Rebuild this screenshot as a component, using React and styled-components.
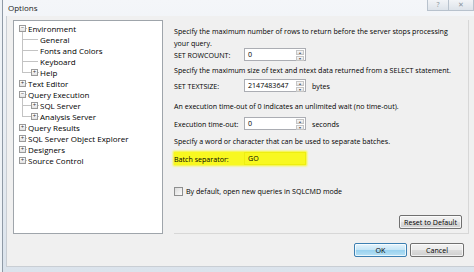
import styled, { createGlobalStyle } from "styled-components";

const GlobalStyle = createGlobalStyle`
  html, body {
    margin: 0;
    padding: 0;
    background: #eef2f6;
  }
  body {
    font-family: "Open Sans", "Noto Sans", "Liberation Sans", sans-serif;
    font-size: 7.1px;
    color: #000;
  }
`;

const Window = styled.div`
  width: 472px;
  height: 272px;
  box-sizing: border-box;
  display: flex;
  flex-direction: column;
  background: linear-gradient(#f4f6f9, #dbe3ec);
  border-left: 1px solid #8f9aa6;
  margin-left: 2px;
  padding: 0 0 5px 3px;
  overflow: hidden;
`;

const TitleBar = styled.div`
  height: 16px;
  display: flex;
  align-items: flex-start;
  justify-content: space-between;
`;

const Title = styled.span`
  font-size: 8px;
  padding: 2px 0 0 2px;
  color: #222;
`;

const CaptionButtons = styled.div`
  display: flex;
`;

const CaptionButton = styled.div`
  width: ${(p) => p.$w}px;
  height: 10px;
  border: 1px solid #b8c2cd;
  border-top: none;
  border-left-width: ${(p) => (p.$first ? 1 : 0)}px;
  background: linear-gradient(#f2f4f7, #dde3ea);
  font-size: 7px;
  line-height: 10px;
  text-align: center;
  color: #8a939c;
`;

const Client = styled.div`
  flex: 1;
  background: #f0f0f0;
  border-left: 1px solid #c9ced4;
  border-bottom: 1px solid #c9ced4;
  display: flex;
  flex-direction: column;
  padding: 4px 0 0 6px;
`;

const Main = styled.div`
  display: flex;
  height: 214px;
`;

const Tree = styled.div`
  width: 150px;
  background: #fff;
  border: 1px solid #9fa5ab;
  padding-top: 2px;
  box-sizing: border-box;
  font-size: 8px;
`;

const TreeRow = styled.div`
  position: relative;
  height: 11px;
  line-height: 11px;
  padding-left: ${(p) => p.$indent}px;
  white-space: nowrap;
`;

const Guide = styled.span`
  position: absolute;
  left: 8px;
  top: ${(p) => p.$top}px;
  height: ${(p) => p.$h}px;
  border-left: 1px solid #c3c3c3;
`;

const Tick = styled.span`
  position: absolute;
  left: ${(p) => p.$left}px;
  top: 5px;
  width: ${(p) => p.$w}px;
  border-top: 1px solid #c3c3c3;
`;

const Expander = styled.span`
  position: absolute;
  left: ${(p) => p.$left}px;
  top: 2px;
  width: 5px;
  height: 5px;
  border: 1px solid #9a9a9a;
  background: linear-gradient(#fff, #e2e2e2);
  font-size: 6px;
  line-height: 5px;
  text-align: center;
  color: #333;
  z-index: 1;
`;

const Panel = styled.div`
  flex: 1;
  margin-left: 11px;
  margin-right: 5px;
  border-bottom: 1px solid #d7d7d7;
  border-right: 1px solid #d7d7d7;
  display: flex;
  flex-direction: column;
  padding-top: 5px;
`;

const Note = styled.p`
  margin: ${(p) => p.$mt || 0}px 0 0;
  line-height: 12px;
  white-space: nowrap;
`;

const FieldRow = styled.div`
  display: flex;
  align-items: center;
  height: 13px;
  margin-top: ${(p) => p.$mt}px;
  background: ${(p) => (p.$hl ? "#f8f820" : "transparent")};
  width: ${(p) => (p.$hl ? "132px" : "auto")};
  box-shadow: ${(p) => (p.$hl ? "0 0 2px 1px #f8f820" : "none")};
`;

const Label = styled.span`
  width: 70px;
  flex: none;
`;

const Input = styled.div`
  width: 62px;
  height: 13px;
  box-sizing: border-box;
  border: 1px solid ${(p) => (p.$hl ? "#eeee10" : "#abadb3")};
  background: ${(p) => (p.$hl ? "#f8f820" : "#fff")};
  display: flex;
  align-items: center;
  padding-left: 3px;
  position: relative;
  line-height: 11px;
`;

const Spinner = styled.div`
  position: absolute;
  right: 1px;
  top: 1px;
  bottom: 1px;
  width: 8px;
  display: flex;
  flex-direction: column;
  gap: 1px;
`;

const SpinHalf = styled.div`
  flex: 1;
  background: linear-gradient(#f7f7f7, #e1e1e1);
  border: 1px solid #c5c5c5;
  box-sizing: border-box;
  font-size: 4px;
  line-height: 3px;
  text-align: center;
  color: #555;
`;

const Unit = styled.span`
  margin-left: 6px;
`;

const CheckRow = styled.div`
  display: flex;
  align-items: center;
  gap: 3px;
  height: 12px;
  margin-top: 20px;
`;

const Box = styled.span`
  width: 7px;
  height: 7px;
  border: 1px solid #8e8f8f;
  background: linear-gradient(135deg, #dcdcdc, #fbfbfb);
`;

const Button = styled.div`
  width: ${(p) => p.$w}px;
  height: 14px;
  box-sizing: border-box;
  border: 1px solid ${(p) => (p.$def ? "#3c7fb1" : "#707070")};
  border-radius: 2px;
  background: ${(p) =>
    p.$def
      ? "linear-gradient(#e5f4fc 0%, #c4e5f6 50%, #98d1ef 51%, #b7e0f4 100%)"
      : "linear-gradient(#f2f2f2 0%, #ebebeb 50%, #dddddd 51%, #cfcfcf 100%)"};
  display: flex;
  align-items: center;
  justify-content: center;
  line-height: 12px;
  box-shadow: inset 0 0 0 1px rgba(255, 255, 255, 0.7);
`;

const ResetWrap = styled.div`
  margin-top: auto;
  display: flex;
  justify-content: flex-end;
  padding: 0 6px 4px 0;
`;

const Footer = styled.div`
  display: flex;
  justify-content: flex-end;
  gap: 3px;
  padding: 9px 10px 0 0;
`;

const treeItems = [
  { text: "Environment", level: 0, exp: "−", open: true },
  { text: "General", level: 1 },
  { text: "Fonts and Colors", level: 1 },
  { text: "Keyboard", level: 1 },
  { text: "Help", level: 1, exp: "+", last: true },
  { text: "Text Editor", level: 0, exp: "+" },
  { text: "Query Execution", level: 0, exp: "−", open: true },
  { text: "SQL Server", level: 1, exp: "+" },
  { text: "Analysis Server", level: 1, exp: "+", last: true },
  { text: "Query Results", level: 0, exp: "+" },
  { text: "SQL Server Object Explorer", level: 0, exp: "+" },
  { text: "Designers", level: 0, exp: "+" },
  { text: "Source Control", level: 0, exp: "+" },
];

const Spin = () => (
  <Spinner>
    <SpinHalf>▴</SpinHalf>
    <SpinHalf>▾</SpinHalf>
  </Spinner>
);

const TreeItem = ({ item }) => {
  const child = item.level === 1;
  return (
    <TreeRow $indent={child ? 26 : 14}>
      {item.open && <Guide $top={8} $h={3} />}
      {child && <Guide $top={0} $h={item.last ? 6 : 11} />}
      {child && !item.exp && <Tick $left={9} $w={15} />}
      {child && item.exp && <Tick $left={9} $w={9} />}
      {item.exp && <Tick $left={child ? 23 : 11} $w={2} />}
      {item.exp && <Expander $left={child ? 17 : 5}>{item.exp}</Expander>}
      {item.text}
    </TreeRow>
  );
};

const App = () => {
  return (
    <>
      <GlobalStyle />
      <Window>
        <TitleBar>
          <Title>Options</Title>
          <CaptionButtons>
            <CaptionButton $w={20} $first>
              ?
            </CaptionButton>
            <CaptionButton $w={24}>✕</CaptionButton>
          </CaptionButtons>
        </TitleBar>
        <Client>
          <Main>
            <Tree>
              {treeItems.map((it) => (
                <TreeItem key={it.text} item={it} />
              ))}
            </Tree>
            <Panel>
              <Note>
                Specify the maximum number of rows to return before the server
                stops processing
                <br />
                your query.
              </Note>
              <FieldRow $mt={-1}>
                <Label>SET ROWCOUNT:</Label>
                <Input>
                  0
                  <Spin />
                </Input>
              </FieldRow>
              <Note $mt={3}>
                Specify the maximum size of text and ntext data returned from a
                SELECT statement.
              </Note>
              <FieldRow $mt={3}>
                <Label>SET TEXTSIZE:</Label>
                <Input>
                  2147483647
                  <Spin />
                </Input>
                <Unit>bytes</Unit>
              </FieldRow>
              <Note $mt={8}>
                An execution time-out of 0 indicates an unlimited wait (no
                time-out).
              </Note>
              <FieldRow $mt={5}>
                <Label>Execution time-out:</Label>
                <Input>
                  0
                  <Spin />
                </Input>
                <Unit>seconds</Unit>
              </FieldRow>
              <Note $mt={5}>
                Specify a word or character that can be used to separate
                batches.
              </Note>
              <FieldRow $hl $mt={5}>
                <Label>Batch separator:</Label>
                <Input $hl>GO</Input>
              </FieldRow>
              <CheckRow>
                <Box />
                By default, open new queries in SQLCMD mode
              </CheckRow>
              <ResetWrap>
                <Button $w={63}>Reset to Default</Button>
              </ResetWrap>
            </Panel>
          </Main>
          <Footer>
            <Button $w={53} $def>
              OK
            </Button>
            <Button $w={54}>Cancel</Button>
          </Footer>
        </Client>
      </Window>
    </>
  );
};

export default App;
